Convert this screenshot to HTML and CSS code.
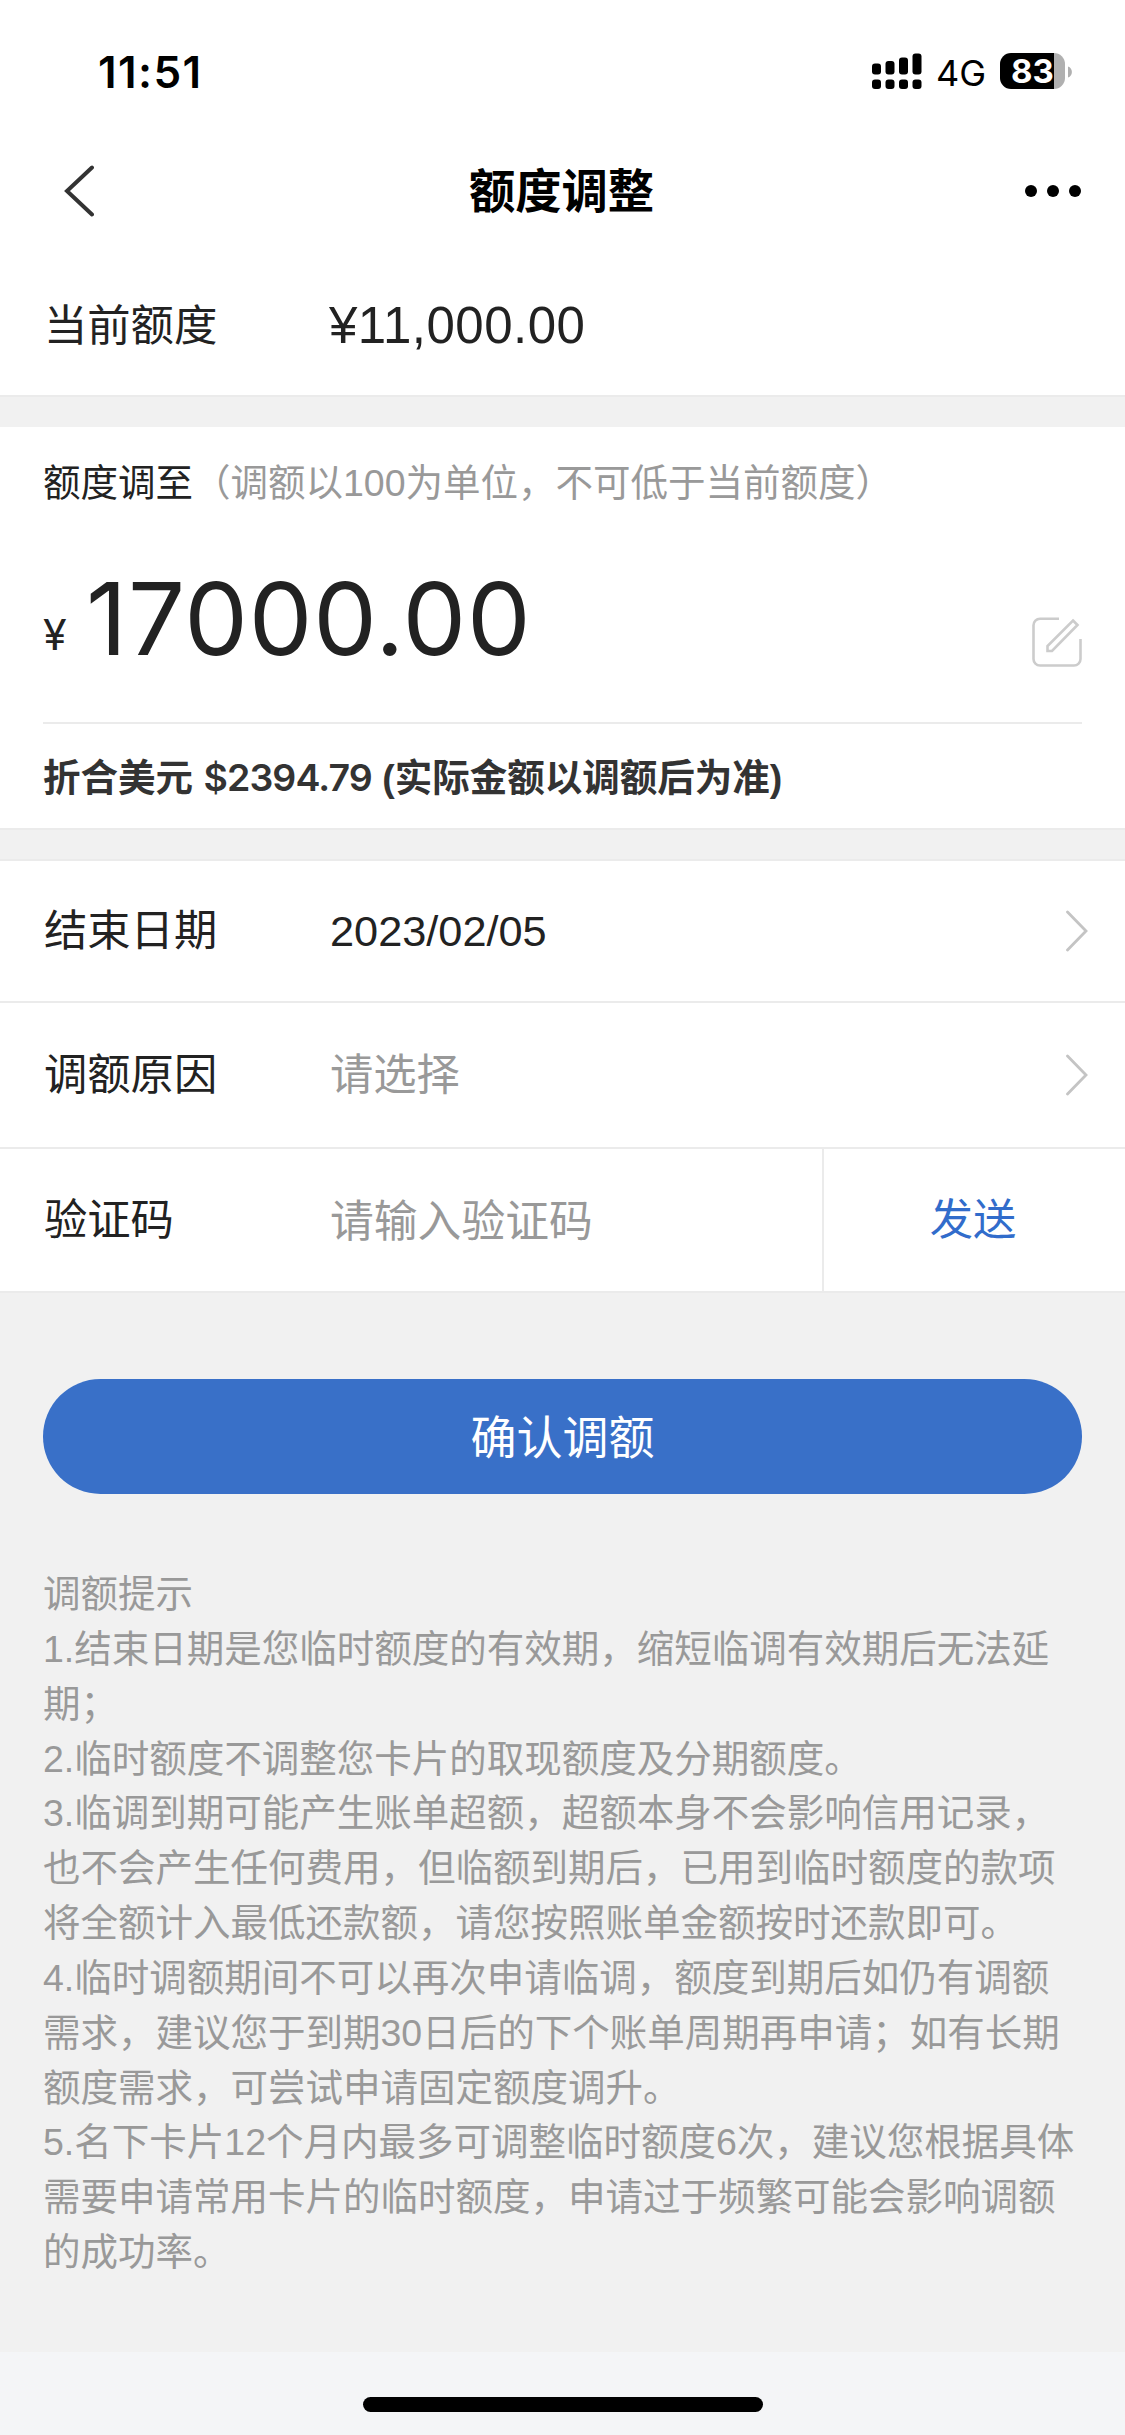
FILE: index.html
```html
<!DOCTYPE html>
<html lang="zh-CN">
<head>
<meta charset="utf-8">
<title>额度调整</title>
<link rel="stylesheet" href="styles.css">
</head>
<body>
<div class="page">
  <div class="status">
    <span class="time">11:51</span>
    <div class="status-right">
      <svg class="signal" width="50" height="36" viewBox="0 0 50 36">
        <rect x="0" y="10.5" width="9" height="11" rx="3"/>
        <rect x="13.5" y="8" width="9" height="13.5" rx="3"/>
        <rect x="27" y="4.5" width="9" height="17" rx="3"/>
        <rect x="40.5" y="0.5" width="9" height="21" rx="3"/>
        <rect x="0" y="26.5" width="9" height="9.5" rx="3"/>
        <rect x="13.5" y="26.5" width="9" height="9.5" rx="3"/>
        <rect x="27" y="26.5" width="9" height="9.5" rx="3"/>
        <rect x="40.5" y="26.5" width="9" height="9.5" rx="3"/>
      </svg>
      <span class="network">4G</span>
      <div class="battery"><span class="level">83</span></div>
      <svg class="nub" width="4" height="12" viewBox="0 0 4 12"><path d="M0 0.5C5.2 2 5.2 10 0 11.5Z" fill="#b0b0b0"/></svg>
    </div>
  </div>
  <div class="nav">
    <svg class="back" width="30" height="52" viewBox="0 0 30 52"><path d="M28 2.5 3 26 28 49.5" fill="none" stroke="#333" stroke-width="4" stroke-linecap="round" stroke-linejoin="miter"/></svg>
    <h1 class="title">额度调整</h1>
    <svg class="more" width="56" height="12" viewBox="0 0 56 12"><circle cx="6" cy="6" r="6"/><circle cx="28" cy="6" r="6"/><circle cx="50" cy="6" r="6"/></svg>
  </div>
  <div class="row current">
    <span class="label">当前额度</span>
    <span class="limit">¥11,000.00</span>
  </div>
  <div class="adjust">
    <div class="adjust-head">额度调至<span class="hint">（调额以100为单位，不可低于当前额度）</span></div>
    <div class="amount">
      <span class="yen">¥</span>
      <span class="number">17000.00</span>
      <svg class="edit" width="50" height="50" viewBox="0 0 50 50" fill="none" stroke="#ccc" stroke-width="2.6">
        <path d="M27 1.7H8A6.5 6.5 0 0 0 1.5 8.2V42A6.5 6.5 0 0 0 8 48.5H42A6.5 6.5 0 0 0 48.5 42V22"/>
        <path d="M41 3.5 45.5 8 20 34H15.5V29Z"/>
      </svg>
    </div>
    <div class="usd">折合美元 <span class="usd-number">$2394.79</span> (实际金额以调额后为准)</div>
  </div>
  <div class="form">
    <div class="row date">
      <span class="label">结束日期</span>
      <span class="value day">2023/02/05</span>
      <svg class="chevron" width="22" height="42" viewBox="0 0 22 42"><path d="M1.5 2 20 21 1.5 40"/></svg>
    </div>
    <div class="row reason">
      <span class="label">调额原因</span>
      <span class="value empty">请选择</span>
      <svg class="chevron" width="22" height="42" viewBox="0 0 22 42"><path d="M1.5 2 20 21 1.5 40"/></svg>
    </div>
    <div class="row code">
      <span class="label">验证码</span>
      <span class="value empty input">请输入验证码</span>
      <span class="send">发送</span>
    </div>
  </div>
  <div class="submit">确认调额</div>
  <div class="notes">调额提示<br>1.结束日期是您临时额度的有效期，缩短临调有效期后无法延<br>期；<br>2.临时额度不调整您卡片的取现额度及分期额度。<br>3.临调到期可能产生账单超额，超额本身不会影响信用记录，<br>也不会产生任何费用，但临额到期后，已用到临时额度的款项<br>将全额计入最低还款额，请您按照账单金额按时还款即可。<br>4.临时调额期间不可以再次申请临调，额度到期后如仍有调额<br>需求，建议您于到期30日后的下个账单周期再申请；如有长期<br>额度需求，可尝试申请固定额度调升。<br>5.名下卡片12个月内最多可调整临时额度6次，建议您根据具体<br>需要申请常用卡片的临时额度，申请过于频繁可能会影响调额<br>的成功率。</div>
  <div class="home"><div class="home-bar"></div></div>
</div>
</body>
</html>
```
FILE: styles.css
```css
* { box-sizing: border-box; }
body {
  margin: 0;
  background: #f1f1f1;
  color: #222;
  font-family: "Liberation Sans", "Noto Sans CJK SC", sans-serif;
}
.page {
  width: 1125px;
  height: 2435px;
  display: flex;
  flex-direction: column;
  overflow: hidden;
}
.status, .nav {
  display: flex;
  justify-content: space-between;
  align-items: center;
  background: #fff;
  color: #000;
  flex: none;
}
.status { height: 142px; padding: 0 53px 0 98px; }
.time { font: 600 44px/50px Inter, sans-serif; letter-spacing: 1.4px; margin-top: 1px; }
.status-right { display: flex; align-items: center; }
.network { font: 400 36px/40px Inter, sans-serif; margin: 4px 0 0 14px; width: 64px; }
.battery {
  width: 65px;
  height: 36px;
  border-radius: 11px;
  background: linear-gradient(90deg, #000 54px, #b0b0b0 54px);
  display: flex;
  padding-left: 11px;
}
.level { font: 700 33px/37px Inter, sans-serif; color: #fff; }
.nub { margin: 1px 0 0 3px; }
.nav { height: 97px; padding: 0 44px 0 64px; }
.title {
  margin: 0 0 5px 4px;
  font-size: 46.3px;
  line-height: 60px;
  font-weight: 700;
  font-family: "Noto Sans CJK SC", sans-serif;
}
.row { display: flex; align-items: center; background: #fff; padding-left: 44px; flex: none; }
.label { width: 286px; font-size: 43.3px; line-height: 60px; }
.current { height: 158px; padding-top: 18px; border-bottom: 2px solid #ebebeb; }
.limit { font-size: 51px; line-height: 60px; letter-spacing: 0.5px; margin-left: -1px; }
.adjust { background: #fff; margin-top: 30px; padding: 0 43px; height: 403px; border-bottom: 2px solid #ebebeb; flex: none; }
.adjust-head { padding-top: 28px; font-size: 37.5px; line-height: 56px; white-space: nowrap; }
.hint { color: #999; }
.amount { height: 213px; border-bottom: 2px solid #ebebeb; display: flex; align-items: center; }
.yen { font: 400 43px/50px Inter, sans-serif; width: 43px; margin-top: 35px; }
.number { font: 400 101px/110px Inter, sans-serif; letter-spacing: 0.8px; margin-top: 2px; flex: 1; }
.edit { margin-top: 51px; }
.usd { font-size: 37.5px; line-height: 56px; font-weight: 700; color: #333; margin-top: 26px; white-space: nowrap; }
.usd-number { font-family: Inter, sans-serif; font-weight: 600; letter-spacing: -0.9px; }
.form { margin-top: 29px; border-top: 2px solid #ebebeb; border-bottom: 2px solid #ebebeb; flex: none; }
.date { height: 142px; border-bottom: 2px solid #ebebeb; }
.reason { height: 146px; border-bottom: 2px solid #ebebeb; }
.code { height: 142px; }
.value { flex: 1; font-size: 43.3px; line-height: 60px; }
.day { padding-bottom: 1px; }
.empty { color: #999; }
.input { font-size: 43.8px; padding: 4px 0 0; }
.chevron { margin-right: 37px; fill: none; stroke: #c4c4c4; stroke-width: 2.8; stroke-linecap: round; }
.send {
  width: 303px;
  height: 142px;
  border-left: 2px solid #ebebeb;
  padding-right: 3px;
  text-align: center;
  font-size: 43.3px;
  line-height: 142px;
  color: #316ccb;
}
.submit {
  margin: 86px 43px 0;
  height: 115px;
  border-radius: 58px;
  background: #3970c8;
  color: #fff;
  text-align: center;
  font-size: 46px;
  line-height: 118px;
  flex: none;
}
.notes { margin: 73px 0 0 43px; font-size: 37.5px; line-height: 54.84px; color: #999; white-space: nowrap; flex: 1; }
.home { height: 83px; background: #f4f5f7; flex: none; padding-top: 45px; }
.home-bar { width: 400px; height: 15px; border-radius: 8px; background: #000; margin: 0 auto; }
```
